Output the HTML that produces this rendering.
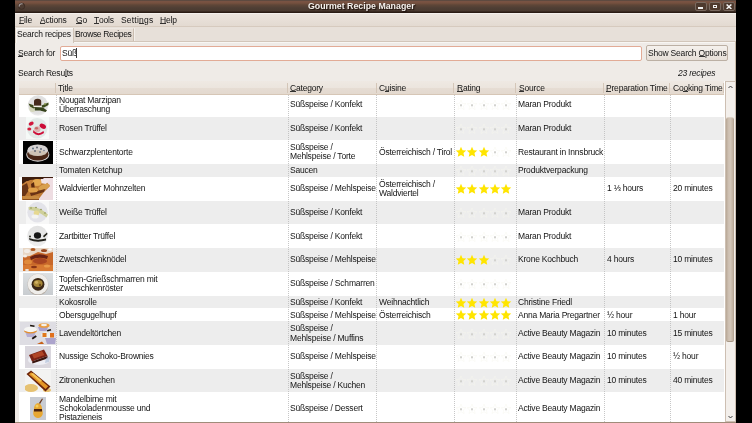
<!DOCTYPE html>
<html><head><meta charset="utf-8"><style>
html,body{margin:0;padding:0;width:752px;height:423px;overflow:hidden;background:#000}
*{box-sizing:border-box}
body{position:relative;font-family:"Liberation Sans",sans-serif;font-size:8.5px;letter-spacing:-0.2px;color:#141414}
.a{position:absolute}
.t{position:absolute;white-space:pre;line-height:10px;height:10px;margin-top:-1px;margin-left:-0.9px;will-change:transform}
u{text-decoration:none;position:relative} u::after{content:'';position:absolute;left:0;right:0;top:8px;height:1px;background:currentColor;opacity:.85}
.row{position:absolute;left:19px;width:705px}
.th{position:absolute;overflow:hidden}
.circ{position:absolute;inset:0;border-radius:50%}
.st{position:absolute}
.grid{position:absolute;top:95px;height:327px;width:1px;background-image:linear-gradient(#bdbdbd 50%,transparent 50%);background-size:1px 2px;opacity:.85}
</style></head><body>
<div class="a" style="left:15px;top:0;width:721px;height:423px;background:#efebe7;overflow:hidden">
 <!-- titlebar -->
 <div class="a" style="left:0;top:0;width:721px;height:13px;background:linear-gradient(#5e4a40 0,#5e4a40 1px,#7a5444 1px,#76513f 3px,#5e4638 5px,#4e3e34 8px,#4a3a30 11px,#2a1c14 12px,#2a1c14 13px)"></div>
</div>
<!-- title text -->
<div class="t" style="left:308.5px;top:1.6px;font-size:8.8px;font-weight:bold;color:#1a0e08;opacity:.7;line-height:10px;height:10px;margin-top:0;margin-left:0;letter-spacing:0;text-shadow:0 0 1.5px #1a0e08">Gourmet Recipe Manager</div>
<div class="t" style="left:308px;top:1px;font-size:8.8px;font-weight:bold;color:#f4f0ec;line-height:10px;height:10px;margin-top:0;margin-left:0;letter-spacing:0">Gourmet Recipe Manager</div>
<!-- circle icon -->
<svg class="a" style="left:17px;top:2px" width="10" height="9" viewBox="0 0 10 9"><circle cx="4.6" cy="4.2" r="3.1" fill="#4e3c32" stroke="#3a2a22" stroke-width="0.8"/><path d="M2.2 4.6 A2.5 2.5 0 0 1 5.6 1.9" fill="none" stroke="#a8a0a0" stroke-width="1.1"/></svg>
<!-- window buttons -->
<div class="a" style="left:695px;top:2px;width:12px;height:9px;border:1px solid #7a6a60;border-radius:2px;background:#4e3a2e"></div>
<div class="a" style="left:698px;top:7px;width:5px;height:2px;background:#f0f0f0"></div>
<div class="a" style="left:709px;top:2px;width:12px;height:9px;border:1px solid #7a6a60;border-radius:2px;background:#4e3a2e"></div>
<div class="a" style="left:712.5px;top:4.5px;width:4px;height:3.5px;border:1px solid #f0f0f0;border-top-width:1.5px"></div>
<div class="a" style="left:723px;top:2px;width:12px;height:9px;border:1px solid #7a6a60;border-radius:2px;background:#4e3a2e"></div>
<svg class="a" style="left:725.5px;top:3.5px" width="6" height="5.5" viewBox="0 0 6 5.5"><path d="M0.6 0.5 L5.4 5 M5.4 0.5 L0.6 5" stroke="#f4f4f4" stroke-width="1.5"/></svg>

<!-- menubar -->
<div class="a" style="left:15px;top:13px;width:721px;height:14px;background:linear-gradient(#f4f0ec 0,#f4f0ec 1px,#ebe4dd 1px,#e3dad1 13px,#d6cabe 13px)"></div>
<div class="t" style="left:19.5px;top:16px"><u>F</u>ile</div>
<div class="t" style="left:40.8px;top:16px"><u>A</u>ctions</div>
<div class="t" style="left:76.8px;top:16px"><u>G</u>o</div>
<div class="t" style="left:94.5px;top:16px"><u>T</u>ools</div>
<div class="t" style="left:121.8px;top:16px;letter-spacing:0.2px">Setti<u>n</u>gs</div>
<div class="t" style="left:160.6px;top:16px"><u>H</u>elp</div>

<!-- tabs strip -->
<div class="a" style="left:15px;top:27px;width:721px;height:15px;background:#e7e0d9"></div>
<div class="a" style="left:134px;top:28px;width:1px;height:13px;background:#f3efea"></div>
<!-- notebook panel -->
<div class="a" style="left:15px;top:41px;width:721px;height:382px;background:#efebe7;border-top:1px solid #d2c6ba;border-left:1px solid #f0e9e2;border-right:1px solid #c8baa8"></div>
<div class="a" style="left:16px;top:42px;width:719px;height:1px;background:#f8f6f3"></div>
<!-- inactive tab -->
<div class="a" style="left:73px;top:28px;width:61px;height:13px;background:linear-gradient(#e8e0d8,#e0d7ce);border-right:1px solid #cabdb0;border-left:1px solid #f0ebe6;border-top:1px solid #ede7e1"></div>
<div class="t" style="left:75.5px;top:30px;letter-spacing:-0.35px">Browse Recipes</div>
<!-- active tab -->
<div class="a" style="left:15px;top:28px;width:59px;height:15px;background:#efebe7;border-left:1px solid #e2d6ca;border-right:1px solid #cfc3b6"></div>
<div class="a" style="left:16px;top:28px;width:57px;height:1px;background:#fbfaf8"></div>
<div class="a" style="left:16px;top:29px;width:1px;height:14px;background:#f8f6f3"></div>
<div class="t" style="left:18.3px;top:30px">Search recipes</div>

<!-- search row -->
<div class="t" style="left:19px;top:49px"><u>S</u>earch for</div>
<div class="a" style="left:60px;top:46px;width:582px;height:15px;background:#fff;border:1px solid #e2ab96;border-radius:2px"></div>
<div class="t" style="left:62.5px;top:49px">Süß</div>
<div class="a" style="left:76px;top:48px;width:1px;height:10px;background:#3a3a3a"></div>
<div class="a" style="left:646px;top:45px;width:82px;height:16px;background:linear-gradient(#f5f1ed,#e6dfd8);border:1px solid #bcb0a4;border-radius:2px"></div>
<div class="t" style="left:648.6px;top:48.5px">Show Search <u>O</u>ptions</div>

<!-- results label -->
<div class="t" style="left:19px;top:69px">Search Resu<u>l</u>ts</div>
<div class="t" style="left:678.5px;top:69px;font-style:italic">23 recipes</div>

<!-- tree frame -->
<div class="a" style="left:19px;top:81px;width:706px;height:341px;background:#fff"></div>
<!-- header -->
<div class="a" style="left:19px;top:81px;width:705px;height:14px;background:linear-gradient(#efe9e3 0,#ece5de 50%,#e6ddd4 52%,#e3d9cf 100%);border-bottom:1px solid #d6c6b6"></div>
<div class="a" style="left:55px;top:83px;width:1px;height:10px;background:#d4c6b8"></div><div class="a" style="left:287px;top:83px;width:1px;height:10px;background:#d4c6b8"></div><div class="a" style="left:376px;top:83px;width:1px;height:10px;background:#d4c6b8"></div><div class="a" style="left:453px;top:83px;width:1px;height:10px;background:#d4c6b8"></div><div class="a" style="left:515px;top:83px;width:1px;height:10px;background:#d4c6b8"></div><div class="a" style="left:603px;top:83px;width:1px;height:10px;background:#d4c6b8"></div><div class="a" style="left:669px;top:83px;width:1px;height:10px;background:#d4c6b8"></div><div class="a" style="left:723px;top:83px;width:1px;height:10px;background:#d4c6b8"></div>
<div class="t" style="left:58.5px;top:84px">T<u>i</u>tle</div>
<div class="t" style="left:291.2px;top:84px"><u>C</u>ategory</div>
<div class="t" style="left:379.5px;top:84px">C<u>u</u>isine</div>
<div class="t" style="left:457.8px;top:84px"><u>R</u>ating</div>
<div class="t" style="left:519.5px;top:84px"><u>S</u>ource</div>
<div class="t" style="left:607.3px;top:84px"><u>P</u>reparation Time</div>
<div class="t" style="left:674px;top:84px">Co<u>o</u>king Time</div>

<!-- rows -->
<div class="a" style="left:0;top:0;width:752px;height:422px;overflow:hidden">
<div class="row" style="top:95px;height:22px;background:#ffffff"></div>
<div class="row" style="top:117px;height:23px;background:#ededed"></div>
<div class="row" style="top:140px;height:24px;background:#ffffff"></div>
<div class="row" style="top:164px;height:13px;background:#ededed"></div>
<div class="row" style="top:177px;height:24px;background:#ffffff"></div>
<div class="row" style="top:201px;height:23px;background:#ededed"></div>
<div class="row" style="top:224px;height:24px;background:#ffffff"></div>
<div class="row" style="top:248px;height:24px;background:#ededed"></div>
<div class="row" style="top:272px;height:24px;background:#ffffff"></div>
<div class="row" style="top:296px;height:12px;background:#ededed"></div>
<div class="row" style="top:308px;height:13px;background:#ffffff"></div>
<div class="row" style="top:321px;height:24px;background:#ededed"></div>
<div class="row" style="top:345px;height:24px;background:#ffffff"></div>
<div class="row" style="top:369px;height:23px;background:#ededed"></div>
<div class="row" style="top:392px;height:32px;background:#ffffff"></div>
<svg class="th" style="left:27px;top:95px" width="22" height="21" viewBox="27 95 22 21"><defs><filter id="bl" x="-20%" y="-20%" width="140%" height="140%"><feGaussianBlur stdDeviation="0.45"/></filter></defs>
        <defs><radialGradient id="gN" cx="50%" cy="45%" r="55%"><stop offset="0" stop-color="#dcdcdc"/><stop offset="0.8" stop-color="#e2e2e2"/><stop offset="1" stop-color="#eeeeee"/></radialGradient></defs>
        <circle cx="38" cy="105.5" r="10.2" fill="url(#gN)"/>
        <g filter="url(#bl)">
        <ellipse cx="32.5" cy="108.5" rx="3.2" ry="3.6" fill="#d4d6bc"/>
        <path d="M28.5 103.5 L33 105 L35 107.5 L33.5 108.5 L30 106.5 Z" fill="#3e4a1a"/>
        <path d="M34.5 107 L43 107.5 L47 110.5 L45.5 112 L40 110.5 L35 110.5 Z" fill="#36421a"/>
        <path d="M41.5 105.5 L48.5 102.5 L48.5 105 L44 107.5 L42 107.5 Z" fill="#3e4c1c"/>
        <circle cx="45" cy="104" r="1" fill="#8a9a50"/>
        <path d="M34 101.5 Q34 98.8 37.6 98.8 Q41.2 98.8 41.2 101.5 L41.2 105.8 L34 105.8 Z" fill="#45291a"/>
        <rect x="33.5" y="105.8" width="8" height="1.2" fill="#f4f0e8"/>
        </g></svg>
<div class="t" style="left:59.7px;top:96px">Nougat Marzipan</div><div class="t" style="left:59.7px;top:105px">Überraschung</div>
<div class="t" style="left:291.3px;top:100px">Süßspeise / Konfekt</div>
<div class="t" style="left:518.5px;top:100px">Maran Produkt</div>
<svg class="st" style="left:455.0px;top:99.1px" width="12" height="12" viewBox="0 0 12 12"><path d="M6.00 1.10 L7.41 4.36 L10.95 4.69 L8.28 7.04 L9.06 10.51 L6.00 8.70 L2.94 10.51 L3.72 7.04 L1.05 4.69 L4.59 4.36 Z" fill="none" stroke="#f5f5ee" stroke-width="0.45"/><rect x="5" y="5.3" width="2" height="2" fill="#d2d2ce"/></svg>
<svg class="st" style="left:466.2px;top:99.1px" width="12" height="12" viewBox="0 0 12 12"><path d="M6.00 1.10 L7.41 4.36 L10.95 4.69 L8.28 7.04 L9.06 10.51 L6.00 8.70 L2.94 10.51 L3.72 7.04 L1.05 4.69 L4.59 4.36 Z" fill="none" stroke="#f5f5ee" stroke-width="0.45"/><rect x="5" y="5.3" width="2" height="2" fill="#d2d2ce"/></svg>
<svg class="st" style="left:477.5px;top:99.1px" width="12" height="12" viewBox="0 0 12 12"><path d="M6.00 1.10 L7.41 4.36 L10.95 4.69 L8.28 7.04 L9.06 10.51 L6.00 8.70 L2.94 10.51 L3.72 7.04 L1.05 4.69 L4.59 4.36 Z" fill="none" stroke="#f5f5ee" stroke-width="0.45"/><rect x="5" y="5.3" width="2" height="2" fill="#d2d2ce"/></svg>
<svg class="st" style="left:488.8px;top:99.1px" width="12" height="12" viewBox="0 0 12 12"><path d="M6.00 1.10 L7.41 4.36 L10.95 4.69 L8.28 7.04 L9.06 10.51 L6.00 8.70 L2.94 10.51 L3.72 7.04 L1.05 4.69 L4.59 4.36 Z" fill="none" stroke="#f5f5ee" stroke-width="0.45"/><rect x="5" y="5.3" width="2" height="2" fill="#d2d2ce"/></svg>
<svg class="st" style="left:500.0px;top:99.1px" width="12" height="12" viewBox="0 0 12 12"><path d="M6.00 1.10 L7.41 4.36 L10.95 4.69 L8.28 7.04 L9.06 10.51 L6.00 8.70 L2.94 10.51 L3.72 7.04 L1.05 4.69 L4.59 4.36 Z" fill="none" stroke="#f5f5ee" stroke-width="0.45"/><rect x="5" y="5.3" width="2" height="2" fill="#d2d2ce"/></svg>
<svg class="th" style="left:26px;top:117px" width="23" height="22" viewBox="26 117 23 22"><defs><filter id="bl" x="-20%" y="-20%" width="140%" height="140%"><feGaussianBlur stdDeviation="0.45"/></filter></defs>
        <rect x="26" y="117" width="23" height="22" fill="#f5f9f7"/>
        <circle cx="37.2" cy="128.3" r="10.3" fill="#e2e9e7"/>
        <g filter="url(#bl)">
        <ellipse cx="31.2" cy="123.6" rx="2.6" ry="1.8" fill="#d2143c" transform="rotate(-25 31.2 123.6)"/>
        <ellipse cx="29.3" cy="129" rx="2" ry="1.5" fill="#d4203f"/>
        <ellipse cx="42.8" cy="126.3" rx="3.4" ry="2.3" fill="#cc0e38" transform="rotate(30 42.8 126.3)"/>
        <path d="M33.5 130 Q37 136 43.5 131 L44 133 Q38 137.5 33 132.5 Z" fill="#cf1038"/>
        <ellipse cx="37.3" cy="129.3" rx="3.2" ry="3" fill="#dcb4b2"/>
        <ellipse cx="36.5" cy="128.3" rx="1.6" ry="1.2" fill="#c86a6a"/>
        </g></svg>
<div class="t" style="left:59.7px;top:124px">Rosen Trüffel</div>
<div class="t" style="left:291.3px;top:124px">Süßspeise / Konfekt</div>
<div class="t" style="left:518.5px;top:124px">Maran Produkt</div>
<svg class="st" style="left:455.0px;top:122.7px" width="12" height="12" viewBox="0 0 12 12"><path d="M6.00 1.10 L7.41 4.36 L10.95 4.69 L8.28 7.04 L9.06 10.51 L6.00 8.70 L2.94 10.51 L3.72 7.04 L1.05 4.69 L4.59 4.36 Z" fill="none" stroke="#f5f5ee" stroke-width="0.45"/><rect x="5" y="5.3" width="2" height="2" fill="#d2d2ce"/></svg>
<svg class="st" style="left:466.2px;top:122.7px" width="12" height="12" viewBox="0 0 12 12"><path d="M6.00 1.10 L7.41 4.36 L10.95 4.69 L8.28 7.04 L9.06 10.51 L6.00 8.70 L2.94 10.51 L3.72 7.04 L1.05 4.69 L4.59 4.36 Z" fill="none" stroke="#f5f5ee" stroke-width="0.45"/><rect x="5" y="5.3" width="2" height="2" fill="#d2d2ce"/></svg>
<svg class="st" style="left:477.5px;top:122.7px" width="12" height="12" viewBox="0 0 12 12"><path d="M6.00 1.10 L7.41 4.36 L10.95 4.69 L8.28 7.04 L9.06 10.51 L6.00 8.70 L2.94 10.51 L3.72 7.04 L1.05 4.69 L4.59 4.36 Z" fill="none" stroke="#f5f5ee" stroke-width="0.45"/><rect x="5" y="5.3" width="2" height="2" fill="#d2d2ce"/></svg>
<svg class="st" style="left:488.8px;top:122.7px" width="12" height="12" viewBox="0 0 12 12"><path d="M6.00 1.10 L7.41 4.36 L10.95 4.69 L8.28 7.04 L9.06 10.51 L6.00 8.70 L2.94 10.51 L3.72 7.04 L1.05 4.69 L4.59 4.36 Z" fill="none" stroke="#f5f5ee" stroke-width="0.45"/><rect x="5" y="5.3" width="2" height="2" fill="#d2d2ce"/></svg>
<svg class="st" style="left:500.0px;top:122.7px" width="12" height="12" viewBox="0 0 12 12"><path d="M6.00 1.10 L7.41 4.36 L10.95 4.69 L8.28 7.04 L9.06 10.51 L6.00 8.70 L2.94 10.51 L3.72 7.04 L1.05 4.69 L4.59 4.36 Z" fill="none" stroke="#f5f5ee" stroke-width="0.45"/><rect x="5" y="5.3" width="2" height="2" fill="#d2d2ce"/></svg>
<svg class="th" style="left:23px;top:141px" width="30" height="23" viewBox="23 141 30 23"><defs><filter id="bl" x="-20%" y="-20%" width="140%" height="140%"><feGaussianBlur stdDeviation="0.45"/></filter></defs>
        <rect x="23" y="141" width="30" height="23" fill="#020202"/>
        <g filter="url(#bl)">
        <ellipse cx="37.8" cy="154.5" rx="11.5" ry="7.2" fill="#d8d8d8"/>
        <ellipse cx="37.8" cy="154" rx="10.8" ry="6.6" fill="#4a2818"/>
        <ellipse cx="37.7" cy="150.2" rx="10.3" ry="5.8" fill="#d6d2d2"/>
        <ellipse cx="37.5" cy="153" rx="9" ry="3" fill="#c8b8a0" opacity="0.6"/>
        <circle cx="33" cy="148.5" r="1" fill="#607080"/><circle cx="37" cy="147.5" r="0.9" fill="#505866"/><circle cx="41" cy="149" r="1" fill="#606a7a"/>
        <circle cx="35" cy="151" r="0.9" fill="#5a6070"/><circle cx="40" cy="152" r="0.9" fill="#687080"/><circle cx="44" cy="150.5" r="0.8" fill="#707888"/>
        </g></svg>
<div class="t" style="left:59.7px;top:148px">Schwarzplententorte</div>
<div class="t" style="left:291.3px;top:143px">Süßspeise /</div><div class="t" style="left:291.3px;top:152px">Mehlspeise / Torte</div>
<div class="t" style="left:380.3px;top:148px">Österreichisch / Tirol</div>
<div class="t" style="left:518.5px;top:148px">Restaurant in Innsbruck</div>
<svg class="st" style="left:455.0px;top:146.4px" width="12" height="12" viewBox="0 0 12 12"><path d="M6.00 0.80 L7.53 4.20 L11.23 4.60 L8.47 7.10 L9.23 10.75 L6.00 8.90 L2.77 10.75 L3.53 7.10 L0.77 4.60 L4.47 4.20 Z" fill="#ffe500"/></svg>
<svg class="st" style="left:466.2px;top:146.4px" width="12" height="12" viewBox="0 0 12 12"><path d="M6.00 0.80 L7.53 4.20 L11.23 4.60 L8.47 7.10 L9.23 10.75 L6.00 8.90 L2.77 10.75 L3.53 7.10 L0.77 4.60 L4.47 4.20 Z" fill="#ffe500"/></svg>
<svg class="st" style="left:477.5px;top:146.4px" width="12" height="12" viewBox="0 0 12 12"><path d="M6.00 0.80 L7.53 4.20 L11.23 4.60 L8.47 7.10 L9.23 10.75 L6.00 8.90 L2.77 10.75 L3.53 7.10 L0.77 4.60 L4.47 4.20 Z" fill="#ffe500"/></svg>
<svg class="st" style="left:488.8px;top:146.4px" width="12" height="12" viewBox="0 0 12 12"><path d="M6.00 1.10 L7.41 4.36 L10.95 4.69 L8.28 7.04 L9.06 10.51 L6.00 8.70 L2.94 10.51 L3.72 7.04 L1.05 4.69 L4.59 4.36 Z" fill="none" stroke="#f5f5ee" stroke-width="0.45"/><rect x="5" y="5.3" width="2" height="2" fill="#d2d2ce"/></svg>
<svg class="st" style="left:500.0px;top:146.4px" width="12" height="12" viewBox="0 0 12 12"><path d="M6.00 1.10 L7.41 4.36 L10.95 4.69 L8.28 7.04 L9.06 10.51 L6.00 8.70 L2.94 10.51 L3.72 7.04 L1.05 4.69 L4.59 4.36 Z" fill="none" stroke="#f5f5ee" stroke-width="0.45"/><rect x="5" y="5.3" width="2" height="2" fill="#d2d2ce"/></svg>
<div class="t" style="left:59.7px;top:166px">Tomaten Ketchup</div>
<div class="t" style="left:291.3px;top:166px">Saucen</div>
<div class="t" style="left:518.5px;top:166px">Produktverpackung</div>
<svg class="st" style="left:455.0px;top:164.7px" width="12" height="12" viewBox="0 0 12 12"><path d="M6.00 1.10 L7.41 4.36 L10.95 4.69 L8.28 7.04 L9.06 10.51 L6.00 8.70 L2.94 10.51 L3.72 7.04 L1.05 4.69 L4.59 4.36 Z" fill="none" stroke="#f5f5ee" stroke-width="0.45"/><rect x="5" y="5.3" width="2" height="2" fill="#d2d2ce"/></svg>
<svg class="st" style="left:466.2px;top:164.7px" width="12" height="12" viewBox="0 0 12 12"><path d="M6.00 1.10 L7.41 4.36 L10.95 4.69 L8.28 7.04 L9.06 10.51 L6.00 8.70 L2.94 10.51 L3.72 7.04 L1.05 4.69 L4.59 4.36 Z" fill="none" stroke="#f5f5ee" stroke-width="0.45"/><rect x="5" y="5.3" width="2" height="2" fill="#d2d2ce"/></svg>
<svg class="st" style="left:477.5px;top:164.7px" width="12" height="12" viewBox="0 0 12 12"><path d="M6.00 1.10 L7.41 4.36 L10.95 4.69 L8.28 7.04 L9.06 10.51 L6.00 8.70 L2.94 10.51 L3.72 7.04 L1.05 4.69 L4.59 4.36 Z" fill="none" stroke="#f5f5ee" stroke-width="0.45"/><rect x="5" y="5.3" width="2" height="2" fill="#d2d2ce"/></svg>
<svg class="st" style="left:488.8px;top:164.7px" width="12" height="12" viewBox="0 0 12 12"><path d="M6.00 1.10 L7.41 4.36 L10.95 4.69 L8.28 7.04 L9.06 10.51 L6.00 8.70 L2.94 10.51 L3.72 7.04 L1.05 4.69 L4.59 4.36 Z" fill="none" stroke="#f5f5ee" stroke-width="0.45"/><rect x="5" y="5.3" width="2" height="2" fill="#d2d2ce"/></svg>
<svg class="st" style="left:500.0px;top:164.7px" width="12" height="12" viewBox="0 0 12 12"><path d="M6.00 1.10 L7.41 4.36 L10.95 4.69 L8.28 7.04 L9.06 10.51 L6.00 8.70 L2.94 10.51 L3.72 7.04 L1.05 4.69 L4.59 4.36 Z" fill="none" stroke="#f5f5ee" stroke-width="0.45"/><rect x="5" y="5.3" width="2" height="2" fill="#d2d2ce"/></svg>
<svg class="th" style="left:22px;top:177px" width="31" height="23" viewBox="22 177 31 23"><defs><filter id="bl" x="-20%" y="-20%" width="140%" height="140%"><feGaussianBlur stdDeviation="0.45"/></filter></defs>
        <rect x="22" y="177" width="31" height="23" fill="#c07a34"/>
        <g filter="url(#bl)">
        <path d="M22 177 L53 177 L53 179 L40 179 L30 180 L22 184 Z" fill="#3e1e0c"/>
        <path d="M43 178 L53 178 L53 200 L38 200 L44 192 L50 186 Z" fill="#eedde2"/>
        <path d="M41 179 L50 179 L46 184 L40 183 Z" fill="#f0e4e8"/>
        <ellipse cx="37" cy="182.5" rx="4.5" ry="3.5" fill="#e4a850"/>
        <ellipse cx="28" cy="186" rx="4.5" ry="5" fill="#c8803a"/>
        <path d="M22 186 L27 183 L29 190 L25 196 L22 196 Z" fill="#6a3414"/>
        <path d="M31 184 L34 182 L35 190 L32 192 Z" fill="#5a2810"/>
        <ellipse cx="44" cy="187" rx="6" ry="2.6" fill="#d8a050" transform="rotate(-20 44 187)"/>
        <path d="M30 193 L45 189 L44 192 L31 196 Z" fill="#6a3212"/>
        <ellipse cx="33" cy="190" rx="5" ry="2.5" fill="#e0a048"/>
        <rect x="23" y="196" width="16" height="3.5" fill="#c88a40"/>
        <rect x="23" y="199" width="16" height="1" fill="#8a5020"/>
        </g></svg>
<div class="t" style="left:59.7px;top:184px">Waldviertler Mohnzelten</div>
<div class="t" style="left:291.3px;top:184px">Süßspeise / Mehlspeise</div>
<div class="t" style="left:380.3px;top:180px">Österreichisch /</div><div class="t" style="left:380.3px;top:189px">Waldviertel</div>
<div class="t" style="left:608px;top:184px">1 ⅓ hours</div>
<div class="t" style="left:674.3px;top:184px">20 minutes</div>
<svg class="st" style="left:455.0px;top:183.1px" width="12" height="12" viewBox="0 0 12 12"><path d="M6.00 0.80 L7.53 4.20 L11.23 4.60 L8.47 7.10 L9.23 10.75 L6.00 8.90 L2.77 10.75 L3.53 7.10 L0.77 4.60 L4.47 4.20 Z" fill="#ffe500"/></svg>
<svg class="st" style="left:466.2px;top:183.1px" width="12" height="12" viewBox="0 0 12 12"><path d="M6.00 0.80 L7.53 4.20 L11.23 4.60 L8.47 7.10 L9.23 10.75 L6.00 8.90 L2.77 10.75 L3.53 7.10 L0.77 4.60 L4.47 4.20 Z" fill="#ffe500"/></svg>
<svg class="st" style="left:477.5px;top:183.1px" width="12" height="12" viewBox="0 0 12 12"><path d="M6.00 0.80 L7.53 4.20 L11.23 4.60 L8.47 7.10 L9.23 10.75 L6.00 8.90 L2.77 10.75 L3.53 7.10 L0.77 4.60 L4.47 4.20 Z" fill="#ffe500"/></svg>
<svg class="st" style="left:488.8px;top:183.1px" width="12" height="12" viewBox="0 0 12 12"><path d="M6.00 0.80 L7.53 4.20 L11.23 4.60 L8.47 7.10 L9.23 10.75 L6.00 8.90 L2.77 10.75 L3.53 7.10 L0.77 4.60 L4.47 4.20 Z" fill="#ffe500"/></svg>
<svg class="st" style="left:500.0px;top:183.1px" width="12" height="12" viewBox="0 0 12 12"><path d="M6.00 0.80 L7.53 4.20 L11.23 4.60 L8.47 7.10 L9.23 10.75 L6.00 8.90 L2.77 10.75 L3.53 7.10 L0.77 4.60 L4.47 4.20 Z" fill="#ffe500"/></svg>
<svg class="th" style="left:26px;top:201px" width="23" height="23" viewBox="26 201 23 23"><defs><filter id="bl" x="-20%" y="-20%" width="140%" height="140%"><feGaussianBlur stdDeviation="0.45"/></filter></defs>
        <rect x="26" y="201" width="23" height="23" fill="#f7f7f7"/>
        <circle cx="37.5" cy="212.3" r="10.2" fill="#e3e3e9"/>
        <g filter="url(#bl)">
        <path d="M28.5 207 Q38 205.5 48 214.5 L46.5 217.5 Q38 210.5 29 210 Z" fill="#cfd09a"/>
        <circle cx="31" cy="208" r="0.8" fill="#8a9050"/><circle cx="36" cy="207.5" r="0.8" fill="#8a9050"/><circle cx="41" cy="209.5" r="0.8" fill="#8a9050"/><circle cx="45" cy="213" r="0.8" fill="#8a9050"/>
        <ellipse cx="36.5" cy="213" rx="2.8" ry="2.6" fill="#e6d890"/>
        <ellipse cx="35" cy="216.5" rx="3.5" ry="2" fill="#f4f4f0"/>
        </g></svg>
<div class="t" style="left:59.7px;top:208px">Weiße Trüffel</div>
<div class="t" style="left:291.3px;top:208px">Süßspeise / Konfekt</div>
<div class="t" style="left:518.5px;top:208px">Maran Produkt</div>
<svg class="st" style="left:455.0px;top:206.7px" width="12" height="12" viewBox="0 0 12 12"><path d="M6.00 1.10 L7.41 4.36 L10.95 4.69 L8.28 7.04 L9.06 10.51 L6.00 8.70 L2.94 10.51 L3.72 7.04 L1.05 4.69 L4.59 4.36 Z" fill="none" stroke="#f5f5ee" stroke-width="0.45"/><rect x="5" y="5.3" width="2" height="2" fill="#d2d2ce"/></svg>
<svg class="st" style="left:466.2px;top:206.7px" width="12" height="12" viewBox="0 0 12 12"><path d="M6.00 1.10 L7.41 4.36 L10.95 4.69 L8.28 7.04 L9.06 10.51 L6.00 8.70 L2.94 10.51 L3.72 7.04 L1.05 4.69 L4.59 4.36 Z" fill="none" stroke="#f5f5ee" stroke-width="0.45"/><rect x="5" y="5.3" width="2" height="2" fill="#d2d2ce"/></svg>
<svg class="st" style="left:477.5px;top:206.7px" width="12" height="12" viewBox="0 0 12 12"><path d="M6.00 1.10 L7.41 4.36 L10.95 4.69 L8.28 7.04 L9.06 10.51 L6.00 8.70 L2.94 10.51 L3.72 7.04 L1.05 4.69 L4.59 4.36 Z" fill="none" stroke="#f5f5ee" stroke-width="0.45"/><rect x="5" y="5.3" width="2" height="2" fill="#d2d2ce"/></svg>
<svg class="st" style="left:488.8px;top:206.7px" width="12" height="12" viewBox="0 0 12 12"><path d="M6.00 1.10 L7.41 4.36 L10.95 4.69 L8.28 7.04 L9.06 10.51 L6.00 8.70 L2.94 10.51 L3.72 7.04 L1.05 4.69 L4.59 4.36 Z" fill="none" stroke="#f5f5ee" stroke-width="0.45"/><rect x="5" y="5.3" width="2" height="2" fill="#d2d2ce"/></svg>
<svg class="st" style="left:500.0px;top:206.7px" width="12" height="12" viewBox="0 0 12 12"><path d="M6.00 1.10 L7.41 4.36 L10.95 4.69 L8.28 7.04 L9.06 10.51 L6.00 8.70 L2.94 10.51 L3.72 7.04 L1.05 4.69 L4.59 4.36 Z" fill="none" stroke="#f5f5ee" stroke-width="0.45"/><rect x="5" y="5.3" width="2" height="2" fill="#d2d2ce"/></svg>
<svg class="th" style="left:27px;top:225px" width="21" height="22" viewBox="27 225 21 22"><defs><filter id="bl" x="-20%" y="-20%" width="140%" height="140%"><feGaussianBlur stdDeviation="0.45"/></filter></defs>
        <defs><linearGradient id="gZ" x1="0" y1="0" x2="0" y2="1"><stop offset="0" stop-color="#e2e2e2"/><stop offset="1" stop-color="#eeeeee"/></linearGradient></defs>
        <circle cx="37.5" cy="236" r="10.3" fill="url(#gZ)"/>
        <g filter="url(#bl)">
        <path d="M29 238 Q37 241 46 238.5 L46 240.5 Q37 243 29.5 240 Z" fill="#20201a"/>
        <ellipse cx="37.5" cy="235.5" rx="3.6" ry="3.2" fill="#161616"/>
        <path d="M43 236 L47 232.5 L47.5 234 L44 237.5 Z" fill="#202018"/>
        <circle cx="30" cy="236.5" r="1" fill="#303028"/>
        </g></svg>
<div class="t" style="left:59.7px;top:232px">Zartbitter Trüffel</div>
<div class="t" style="left:291.3px;top:232px">Süßspeise / Konfekt</div>
<div class="t" style="left:518.5px;top:232px">Maran Produkt</div>
<svg class="st" style="left:455.0px;top:230.7px" width="12" height="12" viewBox="0 0 12 12"><path d="M6.00 1.10 L7.41 4.36 L10.95 4.69 L8.28 7.04 L9.06 10.51 L6.00 8.70 L2.94 10.51 L3.72 7.04 L1.05 4.69 L4.59 4.36 Z" fill="none" stroke="#f5f5ee" stroke-width="0.45"/><rect x="5" y="5.3" width="2" height="2" fill="#d2d2ce"/></svg>
<svg class="st" style="left:466.2px;top:230.7px" width="12" height="12" viewBox="0 0 12 12"><path d="M6.00 1.10 L7.41 4.36 L10.95 4.69 L8.28 7.04 L9.06 10.51 L6.00 8.70 L2.94 10.51 L3.72 7.04 L1.05 4.69 L4.59 4.36 Z" fill="none" stroke="#f5f5ee" stroke-width="0.45"/><rect x="5" y="5.3" width="2" height="2" fill="#d2d2ce"/></svg>
<svg class="st" style="left:477.5px;top:230.7px" width="12" height="12" viewBox="0 0 12 12"><path d="M6.00 1.10 L7.41 4.36 L10.95 4.69 L8.28 7.04 L9.06 10.51 L6.00 8.70 L2.94 10.51 L3.72 7.04 L1.05 4.69 L4.59 4.36 Z" fill="none" stroke="#f5f5ee" stroke-width="0.45"/><rect x="5" y="5.3" width="2" height="2" fill="#d2d2ce"/></svg>
<svg class="st" style="left:488.8px;top:230.7px" width="12" height="12" viewBox="0 0 12 12"><path d="M6.00 1.10 L7.41 4.36 L10.95 4.69 L8.28 7.04 L9.06 10.51 L6.00 8.70 L2.94 10.51 L3.72 7.04 L1.05 4.69 L4.59 4.36 Z" fill="none" stroke="#f5f5ee" stroke-width="0.45"/><rect x="5" y="5.3" width="2" height="2" fill="#d2d2ce"/></svg>
<svg class="st" style="left:500.0px;top:230.7px" width="12" height="12" viewBox="0 0 12 12"><path d="M6.00 1.10 L7.41 4.36 L10.95 4.69 L8.28 7.04 L9.06 10.51 L6.00 8.70 L2.94 10.51 L3.72 7.04 L1.05 4.69 L4.59 4.36 Z" fill="none" stroke="#f5f5ee" stroke-width="0.45"/><rect x="5" y="5.3" width="2" height="2" fill="#d2d2ce"/></svg>
<svg class="th" style="left:23px;top:248px" width="30" height="23" viewBox="23 248 30 23"><defs><filter id="bl" x="-20%" y="-20%" width="140%" height="140%"><feGaussianBlur stdDeviation="0.45"/></filter></defs>
        <rect x="23" y="248" width="30" height="23" fill="#c8682a"/>
        <g filter="url(#bl)">
        <path d="M23 248 L53 248 L53 252 L46 254 L38 252 L30 256 L23 257 Z" fill="#e8d6c4"/>
        <ellipse cx="27" cy="251" rx="3" ry="2" fill="#f2ece6"/>
        <ellipse cx="33" cy="249.5" rx="2.5" ry="1.5" fill="#b05a24"/>
        <ellipse cx="44" cy="250.5" rx="3" ry="1.5" fill="#9a4a20"/>
        <ellipse cx="50" cy="249.5" rx="2" ry="1.2" fill="#fafafa"/>
        <ellipse cx="25" cy="256" rx="2" ry="1.5" fill="#f4eee8"/>
        <path d="M30 257 Q38 252 48 256 L47 259 Q38 256 31 260 Z" fill="#6a2412"/>
        <ellipse cx="40" cy="261" rx="7" ry="3" fill="#a84420"/>
        <ellipse cx="28" cy="262" rx="4" ry="2.5" fill="#e08a3a"/>
        <rect x="23" y="265" width="30" height="6" fill="#d87a32"/>
        <ellipse cx="34" cy="267" rx="3" ry="1.2" fill="#8a3418"/>
        <ellipse cx="47" cy="266" rx="3" ry="1.5" fill="#e89a48"/>
        <ellipse cx="27" cy="270" rx="2" ry="1" fill="#f0e8e0"/>
        </g></svg>
<div class="t" style="left:59.7px;top:255px">Zwetschkenknödel</div>
<div class="t" style="left:291.3px;top:255px">Süßspeise / Mehlspeise</div>
<div class="t" style="left:518.5px;top:255px">Krone Kochbuch</div>
<div class="t" style="left:608px;top:255px">4 hours</div>
<div class="t" style="left:674.3px;top:255px">10 minutes</div>
<svg class="st" style="left:455.0px;top:253.7px" width="12" height="12" viewBox="0 0 12 12"><path d="M6.00 0.80 L7.53 4.20 L11.23 4.60 L8.47 7.10 L9.23 10.75 L6.00 8.90 L2.77 10.75 L3.53 7.10 L0.77 4.60 L4.47 4.20 Z" fill="#ffe500"/></svg>
<svg class="st" style="left:466.2px;top:253.7px" width="12" height="12" viewBox="0 0 12 12"><path d="M6.00 0.80 L7.53 4.20 L11.23 4.60 L8.47 7.10 L9.23 10.75 L6.00 8.90 L2.77 10.75 L3.53 7.10 L0.77 4.60 L4.47 4.20 Z" fill="#ffe500"/></svg>
<svg class="st" style="left:477.5px;top:253.7px" width="12" height="12" viewBox="0 0 12 12"><path d="M6.00 0.80 L7.53 4.20 L11.23 4.60 L8.47 7.10 L9.23 10.75 L6.00 8.90 L2.77 10.75 L3.53 7.10 L0.77 4.60 L4.47 4.20 Z" fill="#ffe500"/></svg>
<svg class="st" style="left:488.8px;top:253.7px" width="12" height="12" viewBox="0 0 12 12"><path d="M6.00 1.10 L7.41 4.36 L10.95 4.69 L8.28 7.04 L9.06 10.51 L6.00 8.70 L2.94 10.51 L3.72 7.04 L1.05 4.69 L4.59 4.36 Z" fill="none" stroke="#f5f5ee" stroke-width="0.45"/><rect x="5" y="5.3" width="2" height="2" fill="#d2d2ce"/></svg>
<svg class="st" style="left:500.0px;top:253.7px" width="12" height="12" viewBox="0 0 12 12"><path d="M6.00 1.10 L7.41 4.36 L10.95 4.69 L8.28 7.04 L9.06 10.51 L6.00 8.70 L2.94 10.51 L3.72 7.04 L1.05 4.69 L4.59 4.36 Z" fill="none" stroke="#f5f5ee" stroke-width="0.45"/><rect x="5" y="5.3" width="2" height="2" fill="#d2d2ce"/></svg>
<svg class="th" style="left:23px;top:273px" width="30" height="22" viewBox="23 273 30 22"><defs><filter id="bl" x="-20%" y="-20%" width="140%" height="140%"><feGaussianBlur stdDeviation="0.45"/></filter></defs>
        <defs><linearGradient id="gT" x1="0" y1="0" x2="0" y2="1"><stop offset="0" stop-color="#dde0e2"/><stop offset="1" stop-color="#c8ccd0"/></linearGradient></defs>
        <rect x="23" y="273" width="30" height="22" fill="url(#gT)"/>
        <g filter="url(#bl)">
        <ellipse cx="38" cy="284.5" rx="10.5" ry="10.8" fill="#b8b0a8"/>
        <ellipse cx="38" cy="284" rx="10.3" ry="10.3" fill="#efedea"/>
        <circle cx="38" cy="284.3" r="6.4" fill="#3a2812"/>
        <ellipse cx="38" cy="283.5" rx="4.6" ry="3.4" fill="#a88838"/>
        <circle cx="36.5" cy="282.3" r="1.6" fill="#d0b060"/>
        <circle cx="40" cy="285" r="1.2" fill="#6a4a1a"/>
        </g></svg>
<div class="t" style="left:59.7px;top:275px">Topfen-Grießschmarren mit</div><div class="t" style="left:59.7px;top:284px">Zwetschkenröster</div>
<div class="t" style="left:291.3px;top:279px">Süßspeise / Schmarren</div>
<svg class="st" style="left:455.0px;top:278.1px" width="12" height="12" viewBox="0 0 12 12"><path d="M6.00 1.10 L7.41 4.36 L10.95 4.69 L8.28 7.04 L9.06 10.51 L6.00 8.70 L2.94 10.51 L3.72 7.04 L1.05 4.69 L4.59 4.36 Z" fill="none" stroke="#f5f5ee" stroke-width="0.45"/><rect x="5" y="5.3" width="2" height="2" fill="#d2d2ce"/></svg>
<svg class="st" style="left:466.2px;top:278.1px" width="12" height="12" viewBox="0 0 12 12"><path d="M6.00 1.10 L7.41 4.36 L10.95 4.69 L8.28 7.04 L9.06 10.51 L6.00 8.70 L2.94 10.51 L3.72 7.04 L1.05 4.69 L4.59 4.36 Z" fill="none" stroke="#f5f5ee" stroke-width="0.45"/><rect x="5" y="5.3" width="2" height="2" fill="#d2d2ce"/></svg>
<svg class="st" style="left:477.5px;top:278.1px" width="12" height="12" viewBox="0 0 12 12"><path d="M6.00 1.10 L7.41 4.36 L10.95 4.69 L8.28 7.04 L9.06 10.51 L6.00 8.70 L2.94 10.51 L3.72 7.04 L1.05 4.69 L4.59 4.36 Z" fill="none" stroke="#f5f5ee" stroke-width="0.45"/><rect x="5" y="5.3" width="2" height="2" fill="#d2d2ce"/></svg>
<svg class="st" style="left:488.8px;top:278.1px" width="12" height="12" viewBox="0 0 12 12"><path d="M6.00 1.10 L7.41 4.36 L10.95 4.69 L8.28 7.04 L9.06 10.51 L6.00 8.70 L2.94 10.51 L3.72 7.04 L1.05 4.69 L4.59 4.36 Z" fill="none" stroke="#f5f5ee" stroke-width="0.45"/><rect x="5" y="5.3" width="2" height="2" fill="#d2d2ce"/></svg>
<svg class="st" style="left:500.0px;top:278.1px" width="12" height="12" viewBox="0 0 12 12"><path d="M6.00 1.10 L7.41 4.36 L10.95 4.69 L8.28 7.04 L9.06 10.51 L6.00 8.70 L2.94 10.51 L3.72 7.04 L1.05 4.69 L4.59 4.36 Z" fill="none" stroke="#f5f5ee" stroke-width="0.45"/><rect x="5" y="5.3" width="2" height="2" fill="#d2d2ce"/></svg>
<div class="t" style="left:59.7px;top:298px">Kokosrolle</div>
<div class="t" style="left:291.3px;top:298px">Süßspeise / Konfekt</div>
<div class="t" style="left:380.3px;top:298px">Weihnachtlich</div>
<div class="t" style="left:518.5px;top:298px">Christine Friedl</div>
<svg class="st" style="left:455.0px;top:296.7px" width="12" height="12" viewBox="0 0 12 12"><path d="M6.00 0.80 L7.53 4.20 L11.23 4.60 L8.47 7.10 L9.23 10.75 L6.00 8.90 L2.77 10.75 L3.53 7.10 L0.77 4.60 L4.47 4.20 Z" fill="#ffe500"/></svg>
<svg class="st" style="left:466.2px;top:296.7px" width="12" height="12" viewBox="0 0 12 12"><path d="M6.00 0.80 L7.53 4.20 L11.23 4.60 L8.47 7.10 L9.23 10.75 L6.00 8.90 L2.77 10.75 L3.53 7.10 L0.77 4.60 L4.47 4.20 Z" fill="#ffe500"/></svg>
<svg class="st" style="left:477.5px;top:296.7px" width="12" height="12" viewBox="0 0 12 12"><path d="M6.00 0.80 L7.53 4.20 L11.23 4.60 L8.47 7.10 L9.23 10.75 L6.00 8.90 L2.77 10.75 L3.53 7.10 L0.77 4.60 L4.47 4.20 Z" fill="#ffe500"/></svg>
<svg class="st" style="left:488.8px;top:296.7px" width="12" height="12" viewBox="0 0 12 12"><path d="M6.00 0.80 L7.53 4.20 L11.23 4.60 L8.47 7.10 L9.23 10.75 L6.00 8.90 L2.77 10.75 L3.53 7.10 L0.77 4.60 L4.47 4.20 Z" fill="#ffe500"/></svg>
<svg class="st" style="left:500.0px;top:296.7px" width="12" height="12" viewBox="0 0 12 12"><path d="M6.00 0.80 L7.53 4.20 L11.23 4.60 L8.47 7.10 L9.23 10.75 L6.00 8.90 L2.77 10.75 L3.53 7.10 L0.77 4.60 L4.47 4.20 Z" fill="#ffe500"/></svg>
<div class="t" style="left:59.7px;top:311px">Obersgugelhupf</div>
<div class="t" style="left:291.3px;top:311px">Süßspeise / Mehlspeise</div>
<div class="t" style="left:380.3px;top:311px">Österreichisch</div>
<div class="t" style="left:518.5px;top:311px">Anna Maria Pregartner</div>
<div class="t" style="left:608px;top:311px">½ hour</div>
<div class="t" style="left:674.3px;top:311px">1 hour</div>
<svg class="st" style="left:455.0px;top:309.3px" width="12" height="12" viewBox="0 0 12 12"><path d="M6.00 0.80 L7.53 4.20 L11.23 4.60 L8.47 7.10 L9.23 10.75 L6.00 8.90 L2.77 10.75 L3.53 7.10 L0.77 4.60 L4.47 4.20 Z" fill="#ffe500"/></svg>
<svg class="st" style="left:466.2px;top:309.3px" width="12" height="12" viewBox="0 0 12 12"><path d="M6.00 0.80 L7.53 4.20 L11.23 4.60 L8.47 7.10 L9.23 10.75 L6.00 8.90 L2.77 10.75 L3.53 7.10 L0.77 4.60 L4.47 4.20 Z" fill="#ffe500"/></svg>
<svg class="st" style="left:477.5px;top:309.3px" width="12" height="12" viewBox="0 0 12 12"><path d="M6.00 0.80 L7.53 4.20 L11.23 4.60 L8.47 7.10 L9.23 10.75 L6.00 8.90 L2.77 10.75 L3.53 7.10 L0.77 4.60 L4.47 4.20 Z" fill="#ffe500"/></svg>
<svg class="st" style="left:488.8px;top:309.3px" width="12" height="12" viewBox="0 0 12 12"><path d="M6.00 0.80 L7.53 4.20 L11.23 4.60 L8.47 7.10 L9.23 10.75 L6.00 8.90 L2.77 10.75 L3.53 7.10 L0.77 4.60 L4.47 4.20 Z" fill="#ffe500"/></svg>
<svg class="st" style="left:500.0px;top:309.3px" width="12" height="12" viewBox="0 0 12 12"><path d="M6.00 0.80 L7.53 4.20 L11.23 4.60 L8.47 7.10 L9.23 10.75 L6.00 8.90 L2.77 10.75 L3.53 7.10 L0.77 4.60 L4.47 4.20 Z" fill="#ffe500"/></svg>
<svg class="th" style="left:20px;top:322px" width="36" height="23" viewBox="20 322 36 23"><defs><filter id="bl" x="-20%" y="-20%" width="140%" height="140%"><feGaussianBlur stdDeviation="0.45"/></filter></defs>
        <rect x="20" y="322" width="36" height="23" fill="#dedde3"/>
        <g filter="url(#bl)">
        <path d="M25 331 L36 331 L34 337 L27 337 Z" fill="#b6aed2"/>
        <ellipse cx="30.5" cy="329.5" rx="6.5" ry="2.8" fill="#f6f6f4"/>
        <path d="M24 330.5 Q30.5 334 37 330.5 L36.5 332 Q30.5 335 24.5 332 Z" fill="#e4902e"/>
        <path d="M38 327 L48 327 L46.5 331 L39.5 331 Z" fill="#aaa0cc"/>
        <ellipse cx="44" cy="325.5" rx="5.5" ry="2.3" fill="#eb9c3c"/>
        <ellipse cx="44" cy="325" rx="3" ry="1.2" fill="#f4f0ea"/>
        <ellipse cx="47" cy="335" rx="6" ry="3" fill="#f0f0ee"/>
        <rect x="42.5" y="333" width="4" height="4" fill="#e0781e"/>
        <rect x="50" y="333" width="4" height="4.5" fill="#e0701a"/>
        <path d="M45 338 L56 338 L55 344 L47 344 Z" fill="#aca4cc"/>
        <rect x="30" y="325" width="4.5" height="1.6" fill="#1e1410" transform="rotate(10 32 326)"/>
        <rect x="31.5" y="336.5" width="5" height="1.8" fill="#1e1410" transform="rotate(-35 34 337)"/>
        <rect x="47" y="329.5" width="4" height="1.5" fill="#1e1410" transform="rotate(-15 49 330)"/>
        <path d="M37 344 L42 341.5 L44 344 Z" fill="#c86018"/>
        </g></svg>
<div class="t" style="left:59.7px;top:329px">Lavendeltörtchen</div>
<div class="t" style="left:291.3px;top:324px">Süßspeise /</div><div class="t" style="left:291.3px;top:334px">Mehlspeise / Muffins</div>
<div class="t" style="left:518.5px;top:329px">Active Beauty Magazin</div>
<div class="t" style="left:608px;top:329px">10 minutes</div>
<div class="t" style="left:674.3px;top:329px">15 minutes</div>
<svg class="st" style="left:455.0px;top:327.7px" width="12" height="12" viewBox="0 0 12 12"><path d="M6.00 1.10 L7.41 4.36 L10.95 4.69 L8.28 7.04 L9.06 10.51 L6.00 8.70 L2.94 10.51 L3.72 7.04 L1.05 4.69 L4.59 4.36 Z" fill="none" stroke="#f5f5ee" stroke-width="0.45"/><rect x="5" y="5.3" width="2" height="2" fill="#d2d2ce"/></svg>
<svg class="st" style="left:466.2px;top:327.7px" width="12" height="12" viewBox="0 0 12 12"><path d="M6.00 1.10 L7.41 4.36 L10.95 4.69 L8.28 7.04 L9.06 10.51 L6.00 8.70 L2.94 10.51 L3.72 7.04 L1.05 4.69 L4.59 4.36 Z" fill="none" stroke="#f5f5ee" stroke-width="0.45"/><rect x="5" y="5.3" width="2" height="2" fill="#d2d2ce"/></svg>
<svg class="st" style="left:477.5px;top:327.7px" width="12" height="12" viewBox="0 0 12 12"><path d="M6.00 1.10 L7.41 4.36 L10.95 4.69 L8.28 7.04 L9.06 10.51 L6.00 8.70 L2.94 10.51 L3.72 7.04 L1.05 4.69 L4.59 4.36 Z" fill="none" stroke="#f5f5ee" stroke-width="0.45"/><rect x="5" y="5.3" width="2" height="2" fill="#d2d2ce"/></svg>
<svg class="st" style="left:488.8px;top:327.7px" width="12" height="12" viewBox="0 0 12 12"><path d="M6.00 1.10 L7.41 4.36 L10.95 4.69 L8.28 7.04 L9.06 10.51 L6.00 8.70 L2.94 10.51 L3.72 7.04 L1.05 4.69 L4.59 4.36 Z" fill="none" stroke="#f5f5ee" stroke-width="0.45"/><rect x="5" y="5.3" width="2" height="2" fill="#d2d2ce"/></svg>
<svg class="st" style="left:500.0px;top:327.7px" width="12" height="12" viewBox="0 0 12 12"><path d="M6.00 1.10 L7.41 4.36 L10.95 4.69 L8.28 7.04 L9.06 10.51 L6.00 8.70 L2.94 10.51 L3.72 7.04 L1.05 4.69 L4.59 4.36 Z" fill="none" stroke="#f5f5ee" stroke-width="0.45"/><rect x="5" y="5.3" width="2" height="2" fill="#d2d2ce"/></svg>
<svg class="th" style="left:25px;top:346px" width="26" height="22" viewBox="25 346 26 22"><defs><filter id="bl" x="-20%" y="-20%" width="140%" height="140%"><feGaussianBlur stdDeviation="0.45"/></filter></defs>
        <rect x="25" y="346" width="26" height="22" fill="#dad7de"/>
        <g filter="url(#bl)">
        <ellipse cx="39" cy="360" rx="11" ry="5" fill="#eeeef4"/>
        <path d="M29 355 L44 349.5 L47.5 356 L32 361.5 Z" fill="#7a2414"/>
        <path d="M32 354.5 L42 351 L44.5 355 L34 358.5 Z" fill="#b04428"/>
        <path d="M32 361.5 L47.5 356 L47.5 358.5 L32.5 363.5 Z" fill="#3a1410"/>
        <path d="M46 358 L50 357 L49 362 L45 363 Z" fill="#b0c0d8" opacity="0.7"/>
        </g></svg>
<div class="t" style="left:59.7px;top:352px">Nussige Schoko-Brownies</div>
<div class="t" style="left:291.3px;top:352px">Süßspeise / Mehlspeise</div>
<div class="t" style="left:518.5px;top:352px">Active Beauty Magazin</div>
<div class="t" style="left:608px;top:352px">10 minutes</div>
<div class="t" style="left:674.3px;top:352px">½ hour</div>
<svg class="st" style="left:455.0px;top:350.7px" width="12" height="12" viewBox="0 0 12 12"><path d="M6.00 1.10 L7.41 4.36 L10.95 4.69 L8.28 7.04 L9.06 10.51 L6.00 8.70 L2.94 10.51 L3.72 7.04 L1.05 4.69 L4.59 4.36 Z" fill="none" stroke="#f5f5ee" stroke-width="0.45"/><rect x="5" y="5.3" width="2" height="2" fill="#d2d2ce"/></svg>
<svg class="st" style="left:466.2px;top:350.7px" width="12" height="12" viewBox="0 0 12 12"><path d="M6.00 1.10 L7.41 4.36 L10.95 4.69 L8.28 7.04 L9.06 10.51 L6.00 8.70 L2.94 10.51 L3.72 7.04 L1.05 4.69 L4.59 4.36 Z" fill="none" stroke="#f5f5ee" stroke-width="0.45"/><rect x="5" y="5.3" width="2" height="2" fill="#d2d2ce"/></svg>
<svg class="st" style="left:477.5px;top:350.7px" width="12" height="12" viewBox="0 0 12 12"><path d="M6.00 1.10 L7.41 4.36 L10.95 4.69 L8.28 7.04 L9.06 10.51 L6.00 8.70 L2.94 10.51 L3.72 7.04 L1.05 4.69 L4.59 4.36 Z" fill="none" stroke="#f5f5ee" stroke-width="0.45"/><rect x="5" y="5.3" width="2" height="2" fill="#d2d2ce"/></svg>
<svg class="st" style="left:488.8px;top:350.7px" width="12" height="12" viewBox="0 0 12 12"><path d="M6.00 1.10 L7.41 4.36 L10.95 4.69 L8.28 7.04 L9.06 10.51 L6.00 8.70 L2.94 10.51 L3.72 7.04 L1.05 4.69 L4.59 4.36 Z" fill="none" stroke="#f5f5ee" stroke-width="0.45"/><rect x="5" y="5.3" width="2" height="2" fill="#d2d2ce"/></svg>
<svg class="st" style="left:500.0px;top:350.7px" width="12" height="12" viewBox="0 0 12 12"><path d="M6.00 1.10 L7.41 4.36 L10.95 4.69 L8.28 7.04 L9.06 10.51 L6.00 8.70 L2.94 10.51 L3.72 7.04 L1.05 4.69 L4.59 4.36 Z" fill="none" stroke="#f5f5ee" stroke-width="0.45"/><rect x="5" y="5.3" width="2" height="2" fill="#d2d2ce"/></svg>
<svg class="th" style="left:25px;top:370px" width="26" height="22" viewBox="25 370 26 22"><defs><filter id="bl" x="-20%" y="-20%" width="140%" height="140%"><feGaussianBlur stdDeviation="0.45"/></filter></defs>
        <rect x="25" y="370" width="26" height="22" fill="#f3f3f2"/>
        <g filter="url(#bl)">
        <ellipse cx="31" cy="388" rx="7" ry="4" fill="#e6c272"/>
        <ellipse cx="47" cy="390" rx="4" ry="2" fill="#e8c070"/>
        <path d="M26.5 374 L31 370.5 L50.5 386.5 L45.5 391.5 Z" fill="#6a2208"/>
        <path d="M28.8 374.2 L31.2 372.2 L48.2 386.3 L45.5 389 Z" fill="#e49428"/>
        <path d="M31 374 L33 373 L42 380.5 L40 382 Z" fill="#f6c454"/>
        </g></svg>
<div class="t" style="left:59.7px;top:376px">Zitronenkuchen</div>
<div class="t" style="left:291.3px;top:372px">Süßspeise /</div><div class="t" style="left:291.3px;top:381px">Mehlspeise / Kuchen</div>
<div class="t" style="left:518.5px;top:376px">Active Beauty Magazin</div>
<div class="t" style="left:608px;top:376px">10 minutes</div>
<div class="t" style="left:674.3px;top:376px">40 minutes</div>
<svg class="st" style="left:455.0px;top:374.9px" width="12" height="12" viewBox="0 0 12 12"><path d="M6.00 1.10 L7.41 4.36 L10.95 4.69 L8.28 7.04 L9.06 10.51 L6.00 8.70 L2.94 10.51 L3.72 7.04 L1.05 4.69 L4.59 4.36 Z" fill="none" stroke="#f5f5ee" stroke-width="0.45"/><rect x="5" y="5.3" width="2" height="2" fill="#d2d2ce"/></svg>
<svg class="st" style="left:466.2px;top:374.9px" width="12" height="12" viewBox="0 0 12 12"><path d="M6.00 1.10 L7.41 4.36 L10.95 4.69 L8.28 7.04 L9.06 10.51 L6.00 8.70 L2.94 10.51 L3.72 7.04 L1.05 4.69 L4.59 4.36 Z" fill="none" stroke="#f5f5ee" stroke-width="0.45"/><rect x="5" y="5.3" width="2" height="2" fill="#d2d2ce"/></svg>
<svg class="st" style="left:477.5px;top:374.9px" width="12" height="12" viewBox="0 0 12 12"><path d="M6.00 1.10 L7.41 4.36 L10.95 4.69 L8.28 7.04 L9.06 10.51 L6.00 8.70 L2.94 10.51 L3.72 7.04 L1.05 4.69 L4.59 4.36 Z" fill="none" stroke="#f5f5ee" stroke-width="0.45"/><rect x="5" y="5.3" width="2" height="2" fill="#d2d2ce"/></svg>
<svg class="st" style="left:488.8px;top:374.9px" width="12" height="12" viewBox="0 0 12 12"><path d="M6.00 1.10 L7.41 4.36 L10.95 4.69 L8.28 7.04 L9.06 10.51 L6.00 8.70 L2.94 10.51 L3.72 7.04 L1.05 4.69 L4.59 4.36 Z" fill="none" stroke="#f5f5ee" stroke-width="0.45"/><rect x="5" y="5.3" width="2" height="2" fill="#d2d2ce"/></svg>
<svg class="st" style="left:500.0px;top:374.9px" width="12" height="12" viewBox="0 0 12 12"><path d="M6.00 1.10 L7.41 4.36 L10.95 4.69 L8.28 7.04 L9.06 10.51 L6.00 8.70 L2.94 10.51 L3.72 7.04 L1.05 4.69 L4.59 4.36 Z" fill="none" stroke="#f5f5ee" stroke-width="0.45"/><rect x="5" y="5.3" width="2" height="2" fill="#d2d2ce"/></svg>
<svg class="th" style="left:30px;top:397px" width="16" height="23" viewBox="30 397 16 23"><defs><filter id="bl" x="-20%" y="-20%" width="140%" height="140%"><feGaussianBlur stdDeviation="0.45"/></filter></defs>
        <rect x="30" y="397" width="16" height="23" fill="#c8ccd4"/>
        <g filter="url(#bl)">
        <path d="M38 403 Q34 404 34 409 Q32 414 35 417 Q38 419 41 417 Q44 414 42 409 Q42 404 38 403 Z" fill="#e8a830"/>
        <rect x="34" y="409" width="8" height="2.5" fill="#4a2010"/>
        <path d="M39 403 L42 398.5 L43 399 L40 404 Z" fill="#6a3a20"/>
        <circle cx="37" cy="406" r="1.5" fill="#f4d060"/>
        </g></svg>
<div class="t" style="left:59.7px;top:395px">Mandelbirne mit</div><div class="t" style="left:59.7px;top:404px">Schokoladenmousse und</div><div class="t" style="left:59.7px;top:413px">Pistazieneis</div>
<div class="t" style="left:291.3px;top:404px">Süßspeise / Dessert</div>
<div class="t" style="left:518.5px;top:404px">Active Beauty Magazin</div>
<svg class="st" style="left:455.0px;top:402.5px" width="12" height="12" viewBox="0 0 12 12"><path d="M6.00 1.10 L7.41 4.36 L10.95 4.69 L8.28 7.04 L9.06 10.51 L6.00 8.70 L2.94 10.51 L3.72 7.04 L1.05 4.69 L4.59 4.36 Z" fill="none" stroke="#f5f5ee" stroke-width="0.45"/><rect x="5" y="5.3" width="2" height="2" fill="#d2d2ce"/></svg>
<svg class="st" style="left:466.2px;top:402.5px" width="12" height="12" viewBox="0 0 12 12"><path d="M6.00 1.10 L7.41 4.36 L10.95 4.69 L8.28 7.04 L9.06 10.51 L6.00 8.70 L2.94 10.51 L3.72 7.04 L1.05 4.69 L4.59 4.36 Z" fill="none" stroke="#f5f5ee" stroke-width="0.45"/><rect x="5" y="5.3" width="2" height="2" fill="#d2d2ce"/></svg>
<svg class="st" style="left:477.5px;top:402.5px" width="12" height="12" viewBox="0 0 12 12"><path d="M6.00 1.10 L7.41 4.36 L10.95 4.69 L8.28 7.04 L9.06 10.51 L6.00 8.70 L2.94 10.51 L3.72 7.04 L1.05 4.69 L4.59 4.36 Z" fill="none" stroke="#f5f5ee" stroke-width="0.45"/><rect x="5" y="5.3" width="2" height="2" fill="#d2d2ce"/></svg>
<svg class="st" style="left:488.8px;top:402.5px" width="12" height="12" viewBox="0 0 12 12"><path d="M6.00 1.10 L7.41 4.36 L10.95 4.69 L8.28 7.04 L9.06 10.51 L6.00 8.70 L2.94 10.51 L3.72 7.04 L1.05 4.69 L4.59 4.36 Z" fill="none" stroke="#f5f5ee" stroke-width="0.45"/><rect x="5" y="5.3" width="2" height="2" fill="#d2d2ce"/></svg>
<svg class="st" style="left:500.0px;top:402.5px" width="12" height="12" viewBox="0 0 12 12"><path d="M6.00 1.10 L7.41 4.36 L10.95 4.69 L8.28 7.04 L9.06 10.51 L6.00 8.70 L2.94 10.51 L3.72 7.04 L1.05 4.69 L4.59 4.36 Z" fill="none" stroke="#f5f5ee" stroke-width="0.45"/><rect x="5" y="5.3" width="2" height="2" fill="#d2d2ce"/></svg>
<div class="grid" style="left:56px"></div><div class="grid" style="left:288px"></div><div class="grid" style="left:376px"></div><div class="grid" style="left:454px"></div><div class="grid" style="left:516px"></div><div class="grid" style="left:604px"></div><div class="grid" style="left:670px"></div>
</div>

<!-- scrollbar -->
<div class="a" style="left:725px;top:81px;width:11px;height:341px;background:#f3efeb;border:1px solid #cdbfb2"></div>
<svg class="a" style="left:728px;top:84.5px" width="5" height="4" viewBox="0 0 5 4"><path d="M0.5 3 L2.5 1 L4.5 3" fill="none" stroke="#2a2a2a" stroke-width="0.9"/></svg>
<svg class="a" style="left:727.5px;top:414.5px" width="5" height="4" viewBox="0 0 5 4"><path d="M0.5 1 L2.5 3 L4.5 1" fill="none" stroke="#2a2a2a" stroke-width="0.9"/></svg>
<div class="a" style="left:726px;top:117px;width:8px;height:225px;background:linear-gradient(90deg,#b8a896,#cdbfb1 30%,#d3c6b8 55%,#c2b2a2 85%,#ad9c8a);border-radius:2px;border-top:1px solid #ddd2c6;border-bottom:1px solid #a89886"></div>
<!-- bottom border -->
<div class="a" style="left:15px;top:422px;width:721px;height:1px;background:#a08c7a"></div>
</body></html>
